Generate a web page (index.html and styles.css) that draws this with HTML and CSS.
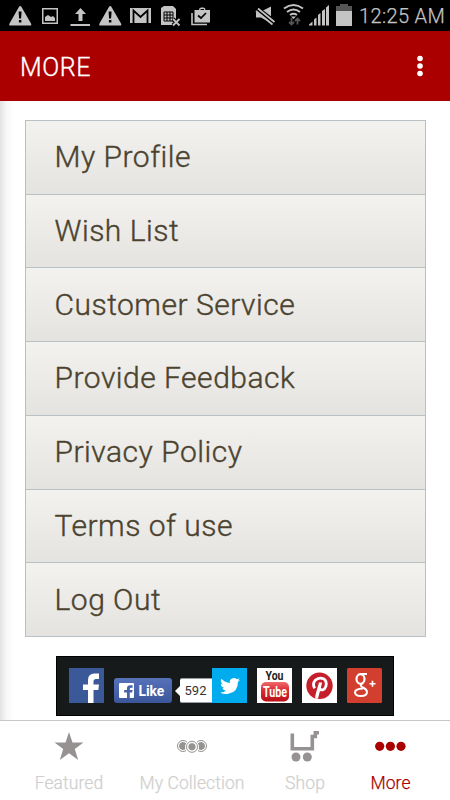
FILE: index.html
```html
<!DOCTYPE html>
<html lang="en">
<head>
<meta charset="utf-8">
<title>More</title>
<link rel="stylesheet" href="styles.css">
</head>
<body>
<div class="screen">
  <div class="status">
    <svg class="notifications" width="225" height="31" viewBox="0 0 225 31" fill="#c4c4c4">
      <path id="warn" fill-rule="evenodd" d="M19.200 6.500q1-1 2 0l9.800 17q1 2-1 2H10.500q-2 0-1-2zM18.600 11.500l.5 7h2l.5-7zM18.900 20v2.500h2.500V20z"/>
      <path fill-rule="evenodd" d="M42 8h16v16H42zM43.500 9.500v13h13v-13z"/>
      <path d="M45 21v-4l3-2 3 2 2-1 2 2v3z"/>
      <path d="M80.500 8l5.500 6h-3.500v7h-4v-7H75zM70.500 24H90v2H70.500z"/>
      <use href="#warn" x="90"/>
      <path d="M130 8h21v15h-21z"/>
      <path d="M133.500 23V10.500l7 6.500 7-6.500V23" fill="none" stroke="#000" stroke-width="1.800"/>
      <path d="M161 8l3-2h9l3 3v14l-2 2h-13z"/>
      <path d="M164 12h9v9h-9zM167 12v9M170 12v9M164 15h9M164 18h9" fill="none" stroke="#000"/>
      <path d="M173 19l6.500 6.500M179.500 19l-6.500 6.500" stroke="#000" stroke-width="4"/>
      <path d="M173 19l6.500 6.500M179.500 19l-6.500 6.500" stroke="#c4c4c4" stroke-width="1.800"/>
      <path fill-rule="evenodd" d="M194.500 10h4.500q0-2.500 2-2.500h2.500q2 0 2 2.500h4.500v12.500h-15.500zM200.500 10h3.500V9h-3.500z"/>
      <path d="M198 15.500l3 2.500 5-5" fill="none" stroke="#000" stroke-width="1.700"/>
      <path d="M192 13v11.500h15" fill="none" stroke="#c4c4c4" stroke-width="1.600"/>
    </svg>
    <svg class="signals" width="110" height="31" viewBox="250 0 110 31" fill="#c4c4c4">
      <path d="M256 11.500h5l10-5v16.500l-10-5.500h-5z"/>
      <path d="M255 7.500l20 15.500" stroke="#000" stroke-width="5.500"/>
      <path d="M256 11l16.500 13.500M258 8.500L274.500 22" stroke="#c4c4c4" stroke-width="1.700"/>
      <g fill="none" stroke="#c4c4c4" stroke-width="2"><path d="M284 8.500q9.500-7 19 0M287 12q6.500-5 13 0M290 15q3.500-2.500 7 0"/></g>
      <path d="M291 16.500h5l-2.500 2.500z"/>
      <path d="M291.500 18v6M289 22l2.500 2.500L294 22M297.500 24.500v-6M295 21l2.500-2.500L300 21" fill="none" stroke="#555" stroke-width="1.800"/>
      <path d="M309 25.500v-1l3.500-3v4zM314 25.500v-6l2.500-2v8zM318 25.500V15l2.500-2v12.500zM322 25.500V11l3-2v16.500zM326 25.500V7.500l3-2.500v20.500z"/>
      <path d="M340 4h8v2h4v5h-16V6h4z" fill="#555"/>
      <path d="M336 11h16v15h-16z"/>
    </svg>
    <span class="clock">12:25 AM</span>
  </div>
  <header class="appbar">
    <h1>MORE</h1>
    <svg width="10" height="24" viewBox="0 0 10 24" fill="#fff"><circle cx="5" cy="4.500" r="2.800"/><circle cx="5" cy="12" r="2.800"/><circle cx="5" cy="19.500" r="2.800"/></svg>
  </header>
  <main>
    <nav class="menu">
      <a>My Profile</a>
      <a>Wish List</a>
      <a>Customer Service</a>
      <a>Provide Feedback</a>
      <a>Privacy Policy</a>
      <a>Terms of use</a>
      <a>Log Out</a>
    </nav>
    <div class="social">
      <svg class="tile" viewBox="0 0 35 35"><path fill="#3b5998" d="M0 0h35v35H0z"/><path fill="#fff" d="M19 35V22h-5v-5.500h5v-4.500q0-6.500 6.500-6.500h4.500V11h-3q-2.500 0-2.500 2.500v3H30l-.7 5.500h-4.800V35z"/></svg>
      <div class="like">
        <svg width="15" height="15" viewBox="0 0 16 16"><rect width="16" height="16" rx="1" fill="#fff"/><path fill="#4762a9" d="M8.500 16v-6H5.500V7.500h3V6q0-3.500 3.500-3.500h2.500V5h-1.500q-1.500 0-1.500 1.500v1h3l-.5 2.500h-2.500v6z"/></svg>
        <span>Like</span>
      </div>
      <svg class="beak" width="5" height="10" viewBox="0 0 5 10"><path d="M5 0v10L0 5z" fill="#fff"/></svg>
      <div class="count">592</div>
      <svg class="tile" viewBox="0 0 35 35"><path fill="#00aced" d="M0 0h35v35H0z"/><path fill="#fff" d="M28 11.800q-1 .5-2.300.7 1.300-.8 1.700-2.200-1.300.7-2.500 1a4.100 4.100 0 0 0-7 3.700q-5-.2-8.400-4.200-1.800 3.400 1.300 5.500-1 0-1.900-.5 0 3.200 3.300 4.100-.9.200-1.800 0 .9 2.700 3.800 2.800-2.600 2-6.100 1.800 3.800 2.200 8.300 1.300 9.800-2 9.500-11.900 1.200-.8 2.100-2.100z"/></svg>
      <svg class="tile yt" viewBox="0 0 35 35"><defs><linearGradient id="tube" x2="0" y2="1"><stop stop-color="#f06a6c"/><stop offset=".4" stop-color="#dc3035"/><stop offset="1" stop-color="#b80f16"/></linearGradient></defs><path fill="#fff" d="M0 0h35v35H0z"/><rect x="4" y="14" width="28" height="19.500" rx="5" fill="url(#tube)"/><text x="8.500" y="12.300" font-size="13.500" textLength="18" lengthAdjust="spacingAndGlyphs" fill="#222">You</text><text x="6" y="29" font-size="14" textLength="24" lengthAdjust="spacingAndGlyphs" fill="#fff">Tube</text></svg>
      <svg class="tile" viewBox="0 0 35 35"><path fill="#fff" d="M0 0h35v35H0z"/><circle cx="17.500" cy="17.800" r="13.200" fill="#c51f2c"/><path d="M12.800 20.300Q10 16 13.200 12.300q3.800-3.500 8.300-1.500 4 2.500 2.300 7.700-2.300 5.300-6.300 2.500" fill="none" stroke="#fff" stroke-width="2.800"/><path d="M17 14.500h3.200L16 30.500q-1.800.5-2.800 0 0-3 .8-5.500z" fill="#fff"/></svg>
      <svg class="tile" viewBox="0 0 35 35"><rect width="35" height="35" rx="1.500" fill="#d33f2e"/><g fill="none" stroke="#fff"><ellipse cx="13.500" cy="11" rx="4" ry="4.800" stroke-width="2.200"/><path d="M13.500 6.100H20M16 15q-4.500 2 0 4.500 4 2 4 4.500 0 4-6 4t-6-3.800q0-3.200 8-3.700" stroke-width="2"/></g><path d="M22.500 15.800h6M25.500 12.800v6" stroke="#fff" stroke-width="1.600"/></svg>
    </div>
  </main>
  <footer class="tabs">
    <div class="tab t1"><svg width="30" height="30" viewBox="0 0 30 30"><path fill="#969292" d="M15 0l3.500 10.500H29.500l-8.700 6.500L24.200 28 15 21.300 5.800 28l3.400-11L.5 10.500h11z"/></svg><span>Featured</span></div>
    <div class="tab t2"><svg width="32" height="30" viewBox="0 0 32 30"><g fill="#969292" stroke="#969292"><circle cx="7" cy="14" r="5.500" fill="#fff"/><circle cx="7" cy="14" r="3.500"/><circle cx="25" cy="14" r="5.500" fill="#fff"/><circle cx="25" cy="14" r="3.500"/><circle cx="16" cy="14.800" r="6.500" fill="#fff" stroke="#fff"/><circle cx="16" cy="14.800" r="5.500" fill="#fff"/><circle cx="16" cy="14.800" r="3.200"/></g></svg><span>My Collection</span></div>
    <div class="tab t3"><svg width="30" height="32" viewBox="0 0 30 32"><path d="M2.300 2.500v15.200h20V5.500h3V1.800h3.700" fill="none" stroke="#969292" stroke-width="3.600"/><circle cx="6" cy="26" r="4.500" fill="#969292"/><circle cx="17.300" cy="26" r="4.500" fill="#969292"/></svg><span>Shop</span></div>
    <div class="tab t4"><svg width="32" height="30" viewBox="0 0 32 30" fill="#ab0000"><circle cx="4.700" cy="14.300" r="4.600"/><circle cx="15.400" cy="14.300" r="4.600"/><circle cx="26" cy="14.300" r="4.600"/></svg><span>More</span></div>
  </footer>
</div>
</body>
</html>
```
FILE: styles.css
```css
* { box-sizing: border-box; }
body { margin: 0; font-family: Roboto, sans-serif; }
.screen { width: 450px; height: 800px; display: flex; flex-direction: column; overflow: hidden; background: #fff; }
.status { height: 31px; flex: none; display: flex; background: #000; }
.status svg { flex: none; }
.signals { margin-left: 25px; }
.clock { margin-left: -1px; line-height: 32px; font-size: 20px; font-weight: 300; color: #c4c4c4; white-space: nowrap; letter-spacing: .35px; -webkit-text-stroke: .25px #c4c4c4; }
.appbar { height: 70px; flex: none; display: flex; align-items: center; justify-content: space-between; padding: 0 25px 0 20px; background: #ab0000; color: #fff; }
.appbar h1 { margin: 2px 0 0; font-size: 25px; font-weight: 300; letter-spacing: .6px; -webkit-text-stroke: .35px #fff; }
main { height: 619px; flex: none; padding: 19px 24px 0 25px; background: linear-gradient(90deg, #e2e2e2, #f6f6f6 6px, #fff 14px); }
.menu { height: 517px; display: grid; grid-template-rows: repeat(7, 1fr); border: 1px solid #b8c0c5; border-top: 0; }
.menu a { display: flex; align-items: center; padding: 0 0 1px 28.500px; border-top: 1px solid #b8c0c5; background: linear-gradient(#f3f2ef, #e4e3df); font-size: 30px; font-weight: 300; letter-spacing: .5px; color: #4b4330; white-space: nowrap; -webkit-text-stroke: .4px #4b4330; }
.social { width: 338px; height: 60px; margin: 19px 0 0 31px; display: flex; align-items: flex-start; padding: 11px 0 0 11.500px; background: #171a1a; border: 1px solid #000; }
.social > * { flex: none; }
.tile { width: 35px; height: 35px; }
.tile + .tile { margin-left: 10px; }
.yt { overflow: visible; }
.yt text { font-family: Roboto, sans-serif; font-weight: 700; }
.like { width: 58px; height: 25px; margin: 10px 0 0 10px; display: flex; align-items: center; gap: 5px; padding-left: 5px; border-radius: 3px; background: linear-gradient(#5672b9, #3c569b); color: #fff; font-size: 13.800px; font-weight: 700; }
.beak { margin: 18px 0 0 3px; }
.count { width: 32px; height: 25px; margin-top: 10px; border-radius: 2px 0 0 2px; background: #fff; border: 1px solid #9a9da3; border-width: 1px 0; color: #333; font-size: 13px; line-height: 23px; text-align: center; }
.tabs { height: 80px; flex: none; display: flex; border-top: 1px solid #c9c9c9; background: #fff; }
.tab { display: flex; flex-direction: column; align-items: center; padding-top: 10px; color: #cfcfcf; font-size: 17.500px; font-weight: 300; letter-spacing: .1px; white-space: nowrap; -webkit-text-stroke: .25px currentColor; }
.tab svg { height: 32px; }
.tab span { margin-top: 10px; line-height: 21px; }
.t1 { width: 138px; }
.t2 { width: 108px; }
.t3 { width: 118px; }
.t4 { width: 53px; color: #ab0000; }
```
